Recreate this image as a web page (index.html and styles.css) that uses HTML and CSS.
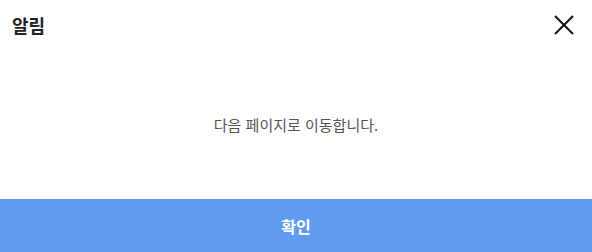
FILE: index.html
```html
<!DOCTYPE html>
<html lang="ko">

<head>
    <meta charset="UTF-8">
    <meta name="viewport" content="width=device-width, initial-scale=1.0">
    <title>알림</title>
    <link rel="stylesheet" href="styles.css">
</head>

<body>

    <div class="modal">
        <div class="modal-header">
            <h2 class="modal-title">알림</h2>
            <button class="close-btn" aria-label="닫기">
                <svg width="20" height="20" viewBox="0 0 20 20">
                    <path d="M1 1 L19 19 M19 1 L1 19" stroke="#111" stroke-width="2" fill="none" />
                </svg>
            </button>
        </div>
        <div class="modal-body">
            <p class="message">다음 페이지로 이동합니다.</p>
        </div>
        <button class="confirm-btn">확인</button>
    </div>

</body>

</html>
```

FILE: styles.css
```css
body {
    margin: 0;
    font-family: "Noto Sans CJK KR", "Noto Sans", sans-serif;
    background-color: white;
}

.modal {
    width: 592px;
    height: 252px;
    display: flex;
    flex-direction: column;
}

.modal-header {
    display: flex;
    justify-content: space-between;
    align-items: center;
    height: 50px;
    padding: 0 18px 0 12px;
}

.modal-title {
    margin: 0;
    font-size: 18px;
    font-weight: 700;
    color: #222;
}

.close-btn {
    border: none;
    background: none;
    padding: 0;
    cursor: pointer;
    display: flex;
}

.modal-body {
    flex: 1;
    display: flex;
    justify-content: center;
    align-items: center;
}

.message {
    margin: 0;
    font-size: 15px;
    color: #555;
}

.confirm-btn {
    height: 53px;
    border: none;
    background-color: #5f9cf0;
    color: white;
    font-family: inherit;
    font-size: 16px;
    font-weight: 700;
    cursor: pointer;
}
```
